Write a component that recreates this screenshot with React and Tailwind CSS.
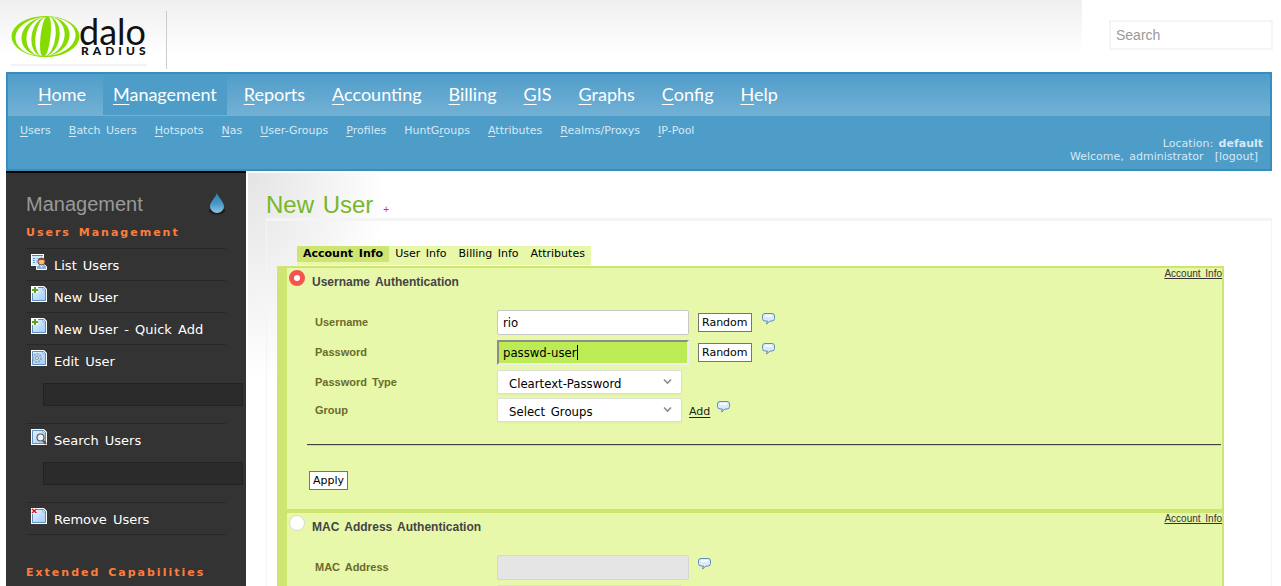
const mainNav = [
  ["H", "ome"],
  ["M", "anagement"],
  ["R", "eports"],
  ["A", "ccounting"],
  ["B", "illing"],
  ["G", "IS"],
  ["G", "raphs"],
  ["C", "onfig"],
  ["H", "elp"],
];

// text before the access key, the key itself, text after it
const subNav = [
  ["", "U", "sers"],
  ["", "B", "atch Users"],
  ["", "H", "otspots"],
  ["", "N", "as"],
  ["", "U", "ser-Groups"],
  ["", "P", "rofiles"],
  ["HuntG", "r", "oups"],
  ["", "A", "ttributes"],
  ["", "R", "ealms/Proxys"],
  ["", "I", "P-Pool"],
];

const sideLinks = [
  { text: "List Users", icon: "list" },
  { text: "New User", icon: "add" },
  { text: "New User - Quick Add", icon: "add" },
  { text: "Edit User", icon: "edit", field: "edit-user" },
  { text: "Search Users", icon: "search", field: "search-users" },
  { text: "Remove Users", icon: "remove" },
];

function Logo() {
  const bands = [
    [29, 23],
    [18, 13],
    [9, 4],
  ];
  return (
    <svg width="136" height="46" viewBox="0 0 136 46" role="img" aria-label="daloRADIUS" className="overflow-visible">
      <ellipse cx="34.5" cy="22.5" rx="34" ry="20.5" fill="#86dc00" />
      <g transform="translate(34.5 22.5) skewX(-6)" fill="#fff">
        {bands.map(([a, b]) => (
          <g key={a}>
            <path d={`M1 -19.5 A${a} 19.5 0 0 1 1 19.5 A${b} 19.5 0 0 0 1 -19.5`} />
            <path d={`M-1 -19.5 A${a} 19.5 0 0 0 -1 19.5 A${b} 19.5 0 0 1 -1 -19.5`} />
          </g>
        ))}
      </g>
      <text x="68" y="31" fontFamily="Lato, sans-serif" fontSize="36" fill="#111">dalo</text>
      <text x="70" y="41" fontFamily="Lato, sans-serif" fontSize="12" fontWeight="900" letterSpacing="4" fill="#111">
        RADIUS
      </text>
    </svg>
  );
}

function Drop() {
  return (
    <svg width="18" height="23" viewBox="0 0 18 23" aria-hidden="true">
      <defs>
        <linearGradient id="drop" x1="0" y1="0" x2="0" y2="1">
          <stop offset="0" stopColor="#2f86b8" />
          <stop offset="0.5" stopColor="#4595c4" />
          <stop offset="1" stopColor="#8fc3e2" />
        </linearGradient>
      </defs>
      <ellipse cx="9" cy="17.5" rx="8" ry="4" fill="#1c1c1c" />
      <path d="M9 0 C10 4 16 9 16 13.5 A7 6.5 0 0 1 2 13.5 C2 9 8 4 9 0 Z" fill="url(#drop)" />
    </svg>
  );
}

function SideIcon({ type }) {
  if (type === "list") {
    return (
      <svg width="16" height="16" viewBox="0 0 16 16" aria-hidden="true">
        <rect x="0.5" y="0.5" width="12" height="11" fill="#d6e8fb" stroke="#fff" />
        <path d="M1 1.5 H12" stroke="#4d82b8" />
        <path d="M2 4.5 H4 M2 6.5 H4 M2 8.5 H4" stroke="#5f97cf" />
        <path d="M5 4.5 H11 M5 6.5 H9 M5 8.5 H8" stroke="#9dc1e8" />
        <path d="M5.5 15.5 V12.5 L8 10.5 H13 L15.5 12.5 V15.5 Z" fill="#7fb0e2" stroke="#fff" />
        <path d="M9 11 L10.5 14 L12 11 Z" fill="#fff" />
        <circle cx="10.5" cy="7.5" r="3.5" fill="#f0bd8a" stroke="#80451f" />
        <path d="M7 7 C7 3 14 3 14 7 L12 6 L9 6 Z" fill="#8d5026" />
      </svg>
    );
  }
  return (
    <svg width="16" height="16" viewBox="0 0 16 16" aria-hidden="true">
      <defs>
        <linearGradient id="page" x1="0" y1="0" x2="1" y2="1">
          <stop offset="0" stopColor="#e8f3ff" />
          <stop offset="1" stopColor="#9fcbf7" />
        </linearGradient>
      </defs>
      <path d="M0 0 H13 L16 3 V16 H0 Z" fill="#fff" />
      <path d="M1.5 1.5 H12.5 L14.5 3.5 V14.5 H1.5 Z" fill="url(#page)" stroke="#5f8fc0" />
      <path d="M12 1 V4 H15 Z" fill="#fff" stroke="#477bb0" strokeWidth="0.5" />
      {type === "add" && (
        <>
          <path d="M0 0 H7 V7 H0 Z" fill="#fff" />
          <path d="M4 1 V7 M1 4 H7" stroke="#5aa51f" strokeWidth="2" />
        </>
      )}
      {type === "edit" && (
        <>
          <circle cx="6" cy="8" r="4" fill="#c6dbef" stroke="#8fabc8" strokeWidth="2" strokeDasharray="2 1" />
          <circle cx="6" cy="8" r="1.5" fill="#fff" stroke="#7292b4" />
        </>
      )}
      {type === "search" && (
        <>
          <path d="M12 11.5 L15 15" stroke="#7a4a22" strokeWidth="2" />
          <circle cx="9.5" cy="8.5" r="3.5" fill="#e6f2ff" stroke="#5b5b5b" strokeWidth="1.2" />
        </>
      )}
      {type === "remove" && (
        <>
          <path d="M0 0 H6 V6 H0 Z" fill="#fff" />
          <path d="M1 1 L5.5 5 M5.5 1 L1 5" stroke="#d8141c" strokeWidth="1.6" />
        </>
      )}
    </svg>
  );
}

function Bubble() {
  return (
    <button type="button" aria-label="Help" className="h-3 shrink-0">
      <svg width="13" height="12" viewBox="0 0 13 12" aria-hidden="true">
        <path
          d="M3 0.5 H10 Q12.5 0.5 12.5 3 V5.5 Q12.5 8 10 8 H8 L4.5 11 L5.5 8 H3 Q0.5 8 0.5 5.5 V3 Q0.5 0.5 3 0.5 Z"
          fill="#dcebfb"
          stroke="#5f8db8"
        />
        <path d="M3 2 H10 V4 H3 Z" fill="#f4f9ff" />
      </svg>
    </button>
  );
}

function Field({ id, label, className, children }) {
  return (
    <li className={`flex items-start ${className}`}>
      <label htmlFor={id} className="w-[182px] shrink-0 font-['Liberation_Sans',sans-serif] text-[11px] leading-6 font-bold text-[#6b6b2b]">
        {label}
      </label>
      {children}
    </li>
  );
}

function Dropdown({ id, option }) {
  return (
    <div className="relative shrink-0">
      <select
        id={id}
        className="block h-6 w-[185px] appearance-none rounded-xs border border-[#dcdfd6] bg-white pt-1 pl-[11px] font-['DejaVu_Sans_Condensed','DejaVu_Sans',sans-serif] text-[13px] leading-4 text-black shadow-xs [word-spacing:2px]"
      >
        <option>{option}</option>
      </select>
      <svg className="pointer-events-none absolute top-2 right-2.5" width="9" height="7" viewBox="0 0 9 7" aria-hidden="true">
        <path d="M1 1.5 L4.5 5 L8 1.5" fill="none" stroke="#8a8a8a" strokeWidth="1.6" />
      </svg>
    </div>
  );
}

function SmallButton({ className, children }) {
  return (
    <button
      type="button"
      className={`h-[19px] shrink-0 border border-[#767676] bg-white px-[3px] pt-px text-[11px] leading-4 text-black ${className}`}
    >
      {children}
    </button>
  );
}

function Panel({ id, title, checked, children }) {
  return (
    <fieldset aria-labelledby={`${id}-title`} className="border-2 border-l-10 border-[#cee572] bg-[#e8f8aa]">
      <div className="flex h-[42px] items-start">
        <input
          id={id}
          type="radio"
          name="auth"
          defaultChecked={checked}
          className="mt-0.5 ml-0.5 size-4 shrink-0 appearance-none rounded-full border border-[#d8dccb] bg-white checked:border-5 checked:border-[#f4544c]"
        />
        <label
          id={`${id}-title`}
          htmlFor={id}
          className="mt-1.5 ml-[7px] grow font-['Liberation_Sans',sans-serif] text-[12px] leading-4 font-bold text-[#444]"
        >
          {title}
        </label>
        <a href="#account" className="font-['Liberation_Sans',sans-serif] text-[10px] leading-3 text-[#333] underline">
          Account Info
        </a>
      </div>
      {children}
    </fieldset>
  );
}

const textInput =
  "block h-[25px] w-48 shrink-0 font-['DejaVu_Sans_Condensed','DejaVu_Sans',sans-serif] text-[13px] text-black outline-none";

export default function App() {
  return (
    <div className="h-screen overflow-hidden bg-white font-['DejaVu_Sans',Verdana,sans-serif] text-[11px] [word-spacing:2px]">
      <header className="flex h-[72px]">
        <div className="flex grow items-start bg-linear-to-b from-[#efefef] from-0% to-white to-75% pl-[11px]">
          <h1 className="mt-3.5 h-[52px] border-b-2 border-[#f4f4f4]">
            <a href="#home">
              <Logo />
            </a>
          </h1>
          <div className="mt-[11px] ml-[19px] h-[58px] border-l border-[#ccc]" />
        </div>
        <form className="w-[199px] shrink-0 pt-5 pr-2 pl-[27px]">
          <input
            type="text"
            aria-label="Search"
            placeholder="Search"
            className="block h-[30px] w-full border-2 border-[#f5f5f5] px-[5px] font-['Liberation_Sans',sans-serif] text-sm text-[#999] outline-none placeholder:text-[#999]"
          />
        </form>
      </header>

      <div className="pr-[9px] pl-1.5">
        <nav className="border-2 border-[#378dbd] bg-[#4e9dc9] text-[#d5e9f5]">
          <ul className="flex h-[42px] gap-[7px] bg-linear-to-b from-[#4f9dca] to-[#73b1d5] pl-5 font-['Trebuchet_MS',Lato,sans-serif] text-lg text-white">
            {mainNav.map(([key, rest]) => (
              <li key={key + rest} className={rest === "anagement" ? "h-[41px] bg-[#4e9dc9]" : ""}>
                <a href="#nav" className="block px-2.5 leading-10">
                  <span className="underline underline-offset-3">{key}</span>
                  {rest}
                </a>
              </li>
            ))}
          </ul>
          <ul className="flex h-[21px] gap-[18px] pt-2 pl-3 leading-[13px]">
            {subNav.map(([before, key, after]) => (
              <li key={key + after}>
                <a href="#sub">
                  {before}
                  <span className="underline underline-offset-2">{key}</span>
                  {after}
                </a>
              </li>
            ))}
          </ul>
          <div className="h-8 pr-[7px] text-right leading-[13px]">
            <p>
              Location: <b>default</b>
            </p>
            <p className="pr-[5px]">
              Welcome, administrator &nbsp;<a href="#logout">[logout]</a>
            </p>
          </div>
        </nav>

        <div className="flex">
          <aside className="h-[640px] w-60 shrink-0 border-t-2 border-black bg-[#333] px-5 pt-4">
            <div className="flex h-9 items-start justify-between">
              <h2 className="mt-[3px] font-['Liberation_Sans',sans-serif] text-xl leading-6 text-[#999]">Management</h2>
              <div className="pt-1">
                <Drop />
              </div>
            </div>
            <h3 className="mb-2 leading-[15px] font-bold tracking-[2px] text-[#ff7d3c]">Users Management</h3>
            <ul className="w-[200px] border-b border-[#282828] text-[13px] text-white">
              {sideLinks.map((link) => (
                <li key={link.text} className={`border-t border-[#282828] pt-[5px] ${link.field ? "h-[79px]" : "h-8"}`}>
                  <a href="#side" className="flex items-start gap-[7px] pl-[5px]">
                    <SideIcon type={link.icon} />
                    <span className="mt-1 leading-4 whitespace-nowrap">{link.text}</span>
                  </a>
                  {link.field && (
                    <input
                      id={link.field}
                      aria-label={link.text}
                      type="text"
                      className="mt-[13px] ml-[17px] block h-[23px] w-[200px] border border-[#222] bg-[#2b2b2b] px-1 text-[11px] text-white outline-none"
                    />
                  )}
                </li>
              ))}
            </ul>
            <h3 className="mt-[30px] leading-[15px] font-bold tracking-[2px] text-[#ff7d3c]">Extended Capabilities</h3>
          </aside>

          <main className="mt-0.5 ml-0.5 grow bg-[radial-gradient(ellipse_140px_210px_at_top_left,#e4e4e4,#fff)] bg-no-repeat pl-[18px]">
            <h2 className="h-[45px] pt-[18px] font-['Liberation_Sans',sans-serif] text-2xl leading-7 text-[#76b82a]">
              <a href="#help" className="flex items-baseline gap-2.5">
                New User
                <span className="text-[10px] leading-3 text-[#f0245c]">+</span>
              </a>
            </h2>
            <div className="border border-t-3 border-[#f4f4f4] pt-[25px] pr-[47px] pl-2.5">
              <ul className="ml-5 flex h-[19px] w-fit bg-[#e8f8aa] leading-4 text-black">
                <li className="h-4 bg-[#cee572] px-1.5 font-bold">
                  <a href="#account">Account Info</a>
                </li>
                <li className="px-1.5">
                  <a href="#user">User Info</a>
                </li>
                <li className="px-1.5">
                  <a href="#billing">Billing Info</a>
                </li>
                <li className="px-1.5">
                  <a href="#attributes">Attributes</a>
                </li>
              </ul>

              <form className="mt-px">
                <Panel id="auth-user" title="Username Authentication" checked>
                  <ul className="pl-7">
                    <Field id="username" label="Username" className="h-[30px]">
                      <input
                        id="username"
                        type="text"
                        defaultValue="rio"
                        className={`${textInput} rounded-xs border border-[#c8c8c8] bg-white px-[5px]`}
                      />
                      <SmallButton className="mt-[3px] mr-2.5 ml-[9px]">Random</SmallButton>
                      <div className="pt-[3px]">
                        <Bubble />
                      </div>
                    </Field>
                    <Field id="password" label="Password" className="h-[30px]">
                      <div className="relative">
                        <input
                          id="password"
                          type="text"
                          defaultValue="passwd-user"
                          className={`${textInput} border-2 border-t-[#8c8c8c] border-r-[#eee] border-b-[#eee] border-l-[#8c8c8c] bg-[#bdeb54] px-1`}
                        />
                        <span className="absolute top-[5px] left-20 h-[15px] w-px bg-black" />
                      </div>
                      <SmallButton className="mt-[3px] mr-2.5 ml-[9px]">Random</SmallButton>
                      <div className="pt-[3px]">
                        <Bubble />
                      </div>
                    </Field>
                    <Field id="password-type" label="Password Type" className="h-7">
                      <Dropdown id="password-type" option="Cleartext-Password" />
                    </Field>
                    <Field id="group" label="Group" className="h-[46px]">
                      <Dropdown id="group" option="Select Groups" />
                      <a href="#add" className="mt-1.5 mr-[7px] ml-[7px] leading-4 text-[#222] underline underline-offset-2">
                        Add
                      </a>
                      <div className="pt-[3px]">
                        <Bubble />
                      </div>
                    </Field>
                  </ul>
                  <hr className="mr-px ml-5 h-0.5 border-t border-b border-t-[#444] border-b-[#ccc]" />
                  <div className="h-[63px] pt-[25px] pl-[22px]">
                    <SmallButton>Apply</SmallButton>
                  </div>
                </Panel>
                <Panel id="auth-mac" title="MAC Address Authentication">
                  <ul className="pl-7">
                    <Field id="mac" label="MAC Address" className="h-[30px]">
                      <input
                        id="mac"
                        type="text"
                        disabled
                        className={`${textInput} rounded-xs border border-[#d6d6d6] bg-[#e5e5e5]`}
                      />
                      <div className="pt-[3px] pl-[9px]">
                        <Bubble />
                      </div>
                    </Field>
                    <Field id="mac-group" label="Group" className="h-[46px]">
                      <Dropdown id="mac-group" option="Select Groups" />
                    </Field>
                  </ul>
                </Panel>
              </form>
            </div>
          </main>
        </div>
      </div>
    </div>
  );
}
